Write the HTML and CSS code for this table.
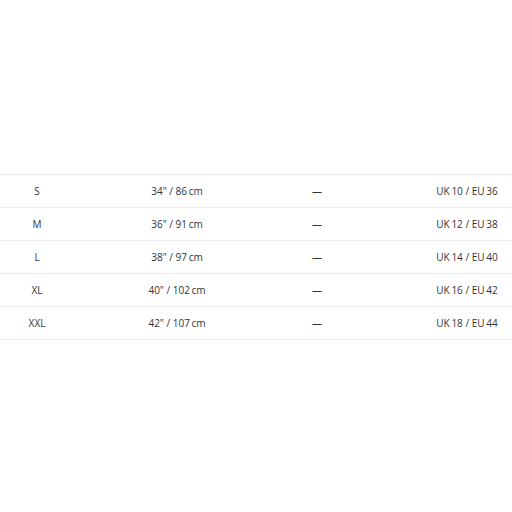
FILE: index.html
```html
<!DOCTYPE html>
<html>
<head>
<meta charset="utf-8">
<link rel="stylesheet" href="styles.css">
</head>
<body>
<div class="page">
  <div class="table">
    <div class="row"><span>S</span><span>34" / 86&#8201;cm</span><span>—</span><span>UK&#8201;10 / EU&#8201;36</span></div>
    <div class="row"><span>M</span><span>36" / 91&#8201;cm</span><span>—</span><span>UK&#8201;12 / EU&#8201;38</span></div>
    <div class="row"><span>L</span><span>38" / 97&#8201;cm</span><span>—</span><span>UK&#8201;14 / EU&#8201;40</span></div>
    <div class="row"><span>XL</span><span>40" / 102&#8201;cm</span><span>—</span><span>UK&#8201;16 / EU&#8201;42</span></div>
    <div class="row"><span>XXL</span><span>42" / 107&#8201;cm</span><span>—</span><span>UK&#8201;18 / EU&#8201;44</span></div>
  </div>
</div>
</body>
</html>
```
FILE: styles.css
```css
html, body {
  margin: 0;
  padding: 0;
  background: #fff;
}
body {
  width: 512px;
  height: 512px;
  overflow: hidden;
  font-family: "Open Sans", "DejaVu Sans", sans-serif;
  font-size: 10px;
  color: #333;
}
.page {
  padding-top: 174px;
  overflow: hidden;
}
.table {
  width: 580px;
  margin-left: -33px;
  border-top: 1px solid #ececec;
}
.row {
  display: grid;
  grid-template-columns: 140px 140px 140px 160px;
  height: 32px;
  align-items: center;
  border-bottom: 1px solid #ececec;
}
.row span {
  text-align: center;
}
```
